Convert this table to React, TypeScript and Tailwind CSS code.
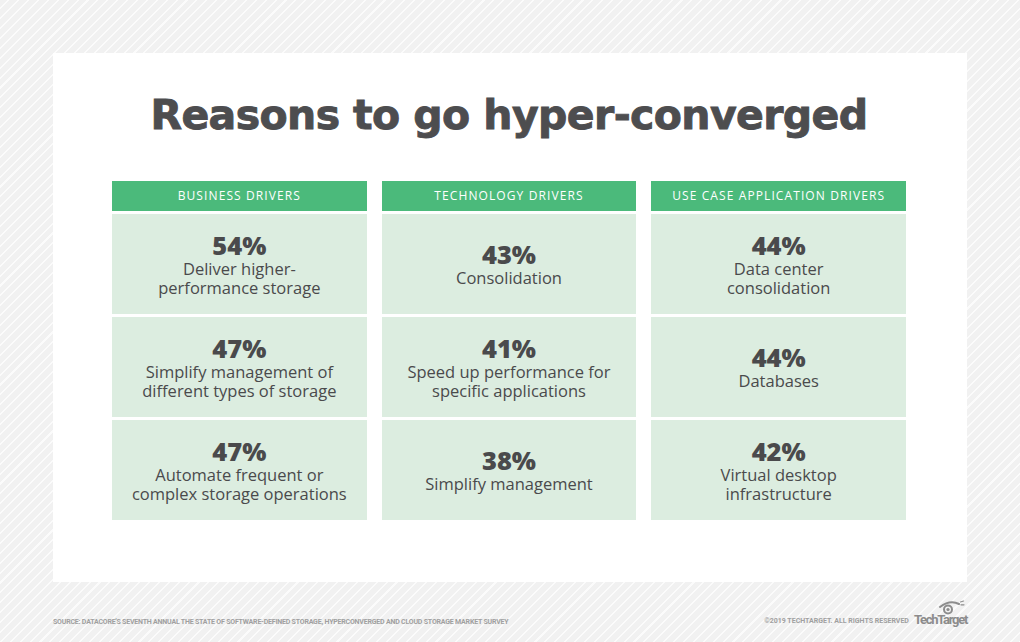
import React from 'react';

interface Entry {
  pct: string;
  lines: string[];
}

interface Column {
  title: string;
  entries: Entry[];
}

const columns: Column[] = [
  {
    title: 'Business drivers',
    entries: [
      { pct: '54%', lines: ['Deliver higher-', 'performance storage'] },
      { pct: '47%', lines: ['Simplify management of', 'different types of storage'] },
      { pct: '47%', lines: ['Automate frequent or', 'complex storage operations'] },
    ],
  },
  {
    title: 'Technology drivers',
    entries: [
      { pct: '43%', lines: ['Consolidation'] },
      { pct: '41%', lines: ['Speed up performance for', 'specific applications'] },
      { pct: '38%', lines: ['Simplify management'] },
    ],
  },
  {
    title: 'Use case application drivers',
    entries: [
      { pct: '44%', lines: ['Data center', 'consolidation'] },
      { pct: '44%', lines: ['Databases'] },
      { pct: '42%', lines: ['Virtual desktop', 'infrastructure'] },
    ],
  },
];

const TechTargetLogo: React.FC = () => (
  <div className="flex flex-col items-end">
    <svg width="28" height="15" viewBox="0 0 28 15" className="mr-[2px] mb-[-2px]" fill="none">
      <path d="M3 7 Q13 -0.5 22 4" stroke="#8c8c8c" strokeWidth="2" strokeLinecap="round" />
      <path d="M23.5 2 L26.5 1 M24 4.8 L27 4.8" stroke="#8c8c8c" strokeWidth="1.2" strokeLinecap="round" />
      <circle cx="11" cy="9.5" r="4" stroke="#8c8c8c" strokeWidth="2" />
      <circle cx="11" cy="9.5" r="1.6" fill="#8c8c8c" />
    </svg>
    <span className="font-['Roboto',sans-serif] text-[13px] font-bold leading-[14px] tracking-[-1.3px] text-[#8c8c8c]">
      TechTarget
    </span>
  </div>
);

export default function App() {
  return (
    <div className="flex h-[642px] w-[1020px] flex-col bg-[#f1f1f1] bg-[repeating-linear-gradient(135deg,#f1f1f1_0px,#f1f1f1_5.5px,#fbfbfb_5.5px,#fbfbfb_7px)] pt-[53px]">
      <div className="mx-[53px] flex h-[529px] flex-col bg-white pt-[42px] pl-[59px] pr-[61px]">
        <h1 className="text-center font-['DejaVu_Sans',sans-serif] text-[41px] font-bold leading-[41px] tracking-[-0.6px] text-[#4d4d4f] [-webkit-text-stroke:0.9px_#4d4d4f]">
          Reasons to go hyper-converged
        </h1>
        <div className="mt-[45px] grid grid-cols-3 gap-x-[15px]">
          {columns.map((col) => (
            <div key={col.title} className="flex flex-col gap-[3px]">
              <div className="flex h-[30px] items-center justify-center bg-[#4bba7b] font-['Open_Sans',sans-serif] text-[12px] font-medium uppercase tracking-[1.1px] text-white">
                {col.title}
              </div>
              {col.entries.map((e, i) => (
                <div
                  key={i}
                  className="flex h-[100px] flex-col items-center justify-center bg-[#dcede0] text-center font-['Open_Sans',sans-serif] text-[#4a4a4c]"
                >
                  <div className="text-[25.5px] font-extrabold leading-[27px]">{e.pct}</div>
                  {e.lines.map((l) => (
                    <div key={l} className="text-[16.5px] leading-[19px]">
                      {l}
                    </div>
                  ))}
                </div>
              ))}
            </div>
          ))}
        </div>
      </div>
      <div className="flex flex-1 items-end justify-between px-[53px] pb-[15px]">
        <span className="mb-[1px] font-['Roboto',sans-serif] text-[7px] font-bold uppercase leading-[8px] tracking-[-0.2px] text-[#a0a0a0]">
          Source: DataCore&apos;s seventh annual the State of Software-Defined Storage, Hyperconverged and Cloud Storage Market Survey
        </span>
        <div className="flex items-end gap-[5px]">
          <span className="mb-[2px] font-['Roboto',sans-serif] text-[7px] font-bold uppercase leading-[8px] text-[#a0a0a0]">
            ©2019 TechTarget. All rights reserved
          </span>
          <TechTargetLogo />
        </div>
      </div>
    </div>
  );
}
